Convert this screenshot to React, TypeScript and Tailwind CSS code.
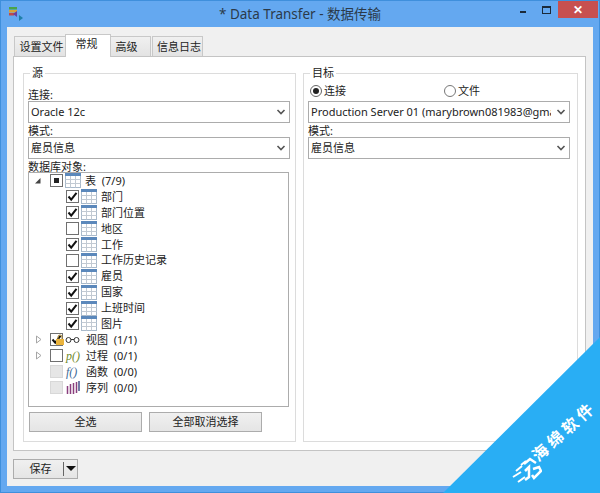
import { FC, ReactNode } from "react";

const FONT = "font-['Noto_Sans','Noto_Sans_CJK_SC',sans-serif]";

const TableIcon: FC = () => (
	<svg width="16" height="15" viewBox="0 0 16 15" className="shrink-0">
		<rect x="0.5" y="0.5" width="15" height="14" fill="#fff" stroke="#a9bacb" />
		<rect x="0" y="0" width="16" height="3" fill="#5b88bb" />
		<path d="M0.5 6.5H15.5M0.5 10.5H15.5M5.5 3V14.5M10.5 3V14.5" stroke="#c2cad3" fill="none" />
	</svg>
);

const Check: FC<{ state?: "on" | "off" | "mixed" | "disabled" }> = ({ state = "off" }) => (
	<span
		className={`flex h-[13px] w-[13px] shrink-0 items-center justify-center border ${
			state === "disabled" ? "border-[#d8d8d8] bg-[#e6e6e6]" : "border-[#707070] bg-white"
		}`}>
		{state === "on" && (
			<svg width="11" height="11" viewBox="0 0 11 11">
				<path d="M1.5 5.5L4.2 8.6L9.5 1.8" stroke="#111" strokeWidth="2" fill="none" />
			</svg>
		)}
		{state === "mixed" && <span className="h-[5px] w-[5px] bg-[#222]" />}
	</span>
);

const Select: FC<{ value: string }> = ({ value }) => (
	<div className="flex h-[22px] items-center border border-[#acacac] bg-white pl-[2px] pr-[3px]">
		<span className="grow overflow-hidden whitespace-nowrap">{value}</span>
		<svg width="10" height="8" viewBox="0 0 10 8" className="ml-[5px] shrink-0">
			<path d="M1.5 2L5 5.5L8.5 2" stroke="#555" strokeWidth="1.6" fill="none" />
		</svg>
	</div>
);

const Label: FC<{ text: string }> = ({ text }) => <div className="h-[14px] leading-[16px]">{text}</div>;

const Row: FC<{ children: ReactNode; indent: string }> = ({ children, indent }) => (
	<div className={`flex h-[15.9px] items-center ${indent}`}>{children}</div>
);

const Arrow: FC<{ open?: boolean }> = ({ open }) => (
	<svg width="8" height="9" viewBox="0 0 8 9" className="shrink-0">
		{open ? (
			<path d="M1 7.5H6.5V2Z" fill="#444" />
		) : (
			<path d="M1.5 1L6 4.5L1.5 8Z" fill="#fff" stroke="#a6a6a6" />
		)}
	</svg>
);

const tables: [string, boolean][] = [
	["部门", true],
	["部门位置", true],
	["地区", false],
	["工作", true],
	["工作历史记录", false],
	["雇员", true],
	["国家", true],
	["上班时间", true],
	["图片", true],
];

const Tree: FC = () => (
	<div className="mr-[1px] -mt-[1px] h-[235px] border border-[#acacac] bg-white">
		<Row indent="pl-[5px]">
			<Arrow open />
			<span className="ml-[8px]">
				<Check state="mixed" />
			</span>
			<span className="ml-[2px]">
				<TableIcon />
			</span>
			<span className="ml-[4px]">表&nbsp; (7/9)</span>
		</Row>
		{tables.map(([name, on]) => (
			<Row key={name} indent="pl-[37px]">
				<Check state={on ? "on" : "off"} />
				<span className="ml-[2px]">
					<TableIcon />
				</span>
				<span className="ml-[4px]">{name}</span>
			</Row>
		))}
		<Row indent="pl-[6px]">
			<Arrow />
			<span className="relative ml-[7px]">
				<Check state="on" />
				<svg width="10" height="11" viewBox="0 0 10 11" className="absolute left-[5px] top-[1px]">
					<path d="M3 5V3a2 2 0 0 1 4 0v2" stroke="#a8842c" fill="none" />
					<rect x="1" y="5" width="8" height="6" fill="#eab33c" />
				</svg>
			</span>
			<svg width="16" height="8" viewBox="0 0 16 8" className="ml-[2px] shrink-0">
				<circle cx="3.5" cy="4" r="2.5" stroke="#333" fill="none" />
				<circle cx="11.5" cy="4" r="2.5" stroke="#333" fill="none" />
				<path d="M6 3.5H9" stroke="#333" />
			</svg>
			<span className="ml-[5px]">视图&nbsp; (1/1)</span>
		</Row>
		<Row indent="pl-[6px]">
			<Arrow />
			<span className="ml-[7px]">
				<Check />
			</span>
			<span className="ml-[3px] w-[15px] font-['Liberation_Serif',serif] text-[12px] italic text-[#6f8a2c]">p()</span>
			<span className="ml-[5px]">过程&nbsp; (0/1)</span>
		</Row>
		<Row indent="pl-[21px]">
			<Check state="disabled" />
			<span className="ml-[3px] w-[15px] font-['Liberation_Serif',serif] text-[12px] italic text-[#3d6a96]">f()</span>
			<span className="ml-[5px]">函数&nbsp; (0/0)</span>
		</Row>
		<Row indent="pl-[21px]">
			<Check state="disabled" />
			<svg width="14" height="13" viewBox="0 0 14 13" className="ml-[3px] mr-[1px] shrink-0">
				<path d="M1.5 5V13M4.5 3V13M7.5 2V13M10.5 1V12" stroke="#8a3f7e" strokeWidth="1.5" />
				<path d="M13 0V10" stroke="#44508a" strokeWidth="1.5" />
			</svg>
			<span className="ml-[5px]">序列&nbsp; (0/0)</span>
		</Row>
	</div>
);

const Button: FC<{ label: string; className: string }> = ({ label, className }) => (
	<button className={`flex h-[20px] items-center justify-center border border-[#acacac] bg-gradient-to-b from-[#f0f0f0] to-[#e5e5e5] ${className}`}>
		{label}
	</button>
);

const Group: FC<{ title: string; children: ReactNode; className: string }> = ({ title, children, className }) => (
	<fieldset className={`min-w-0 border border-[#dcdcdc] pl-[4px] ${className}`}>
		<legend className="ml-[2px] px-[2px] leading-[14px]">{title}</legend>
		{children}
	</fieldset>
);

const App: FC = () => {
	return (
		<div className={`relative h-[493px] w-[600px] overflow-hidden ${FONT} text-[11px] leading-[14px] text-[#222]`}>
			<div className="flex h-full flex-col border border-[#3f8fdc] bg-[#64a8f0] px-[6px] pb-[6px]">
				<div className="relative flex h-[26px] shrink-0 items-center justify-center text-[13.5px] text-[#2b3a4a]">
					<svg width="16" height="16" viewBox="0 0 16 16" className="absolute left-[1px] top-[5px]">
						<rect x="1" y="1" width="8" height="2.5" fill="#4aa34a" />
						<rect x="1" y="4" width="8" height="2.5" fill="#d9a23a" />
						<rect x="1" y="7" width="5" height="2.5" fill="#c04a4a" />
						<path d="M5 8L9 5V11Z" fill="#6a3fa0" />
						<path d="M15 12L11 9V15Z" fill="#1f7fa8" />
					</svg>
					* Data Transfer - 数据传输
					<div className="absolute right-[-5px] top-0 flex h-[17px] items-center">
						<span className="mt-[5px] h-[2px] w-[6px] bg-[#1b2a3a]" />
						<span className="ml-[16px] h-[8px] w-[9px] border border-t-2 border-[#1b2a3a]" />
						<span className="ml-[7px] flex h-[17px] w-[40px] items-center justify-center bg-[#c75050] text-[12px] font-bold text-white">✕</span>
					</div>
				</div>
				<div className="flex grow flex-col bg-[#f0f0f0] pl-[6px] pr-[7px] pt-[8px]">
					<div className="relative z-10 flex h-[21px] items-end">
						<div className="ml-[1px] flex h-[20px] w-[52px] items-center justify-center border border-b-0 border-[#c8c8c8] bg-gradient-to-b from-[#f0f0f0] to-[#e3e3e3] pl-[3px]">设置文件</div>
						<div className="-mb-[1px] -ml-[1px] flex h-[23px] w-[46px] items-start justify-center border border-b-0 border-[#c8c8c8] bg-white pt-[2px] pr-[3px]">常规</div>
						<div className="-ml-[1px] flex h-[20px] w-[41px] items-center justify-center border border-b-0 border-[#c8c8c8] bg-gradient-to-b from-[#f0f0f0] to-[#e3e3e3] pr-[8px]">高级</div>
						<div className="ml-[1px] flex h-[20px] w-[51px] items-center justify-center border border-b-0 border-[#c8c8c8] bg-gradient-to-b from-[#f0f0f0] to-[#e3e3e3] pl-[3px]">信息日志</div>
					</div>
					<div className="flex h-[395px] gap-[7px] border border-[#c4c4c4] bg-white pl-[9px] pr-[7px] pt-[9px]">
						<Group title="源" className="h-[376px] w-[273px] pr-[5px]">
							<div className="pt-[7px]">
								<Label text="连接:" />
							</div>
							<Select value="Oracle 12c" />
							<Label text="模式:" />
							<Select value="雇员信息" />
							<Label text="数据库对象:" />
							<Tree />
							<div className="mt-[5px] flex gap-[7px] pl-[1px]">
								<Button label="全选" className="w-[113px]" />
								<Button label="全部取消选择" className="w-[113px]" />
							</div>
						</Group>
						<Group title="目标" className="h-[376px] w-[275px] pr-[7px]">
							<div className="flex h-[16px] items-center pl-[2px] pt-[5px]">
								<span className="flex h-[12px] w-[12px] items-center justify-center rounded-full border border-[#666]">
									<span className="h-[6px] w-[6px] rounded-full bg-[#222]" />
								</span>
								<span className="ml-[2px] w-[120px]">连接</span>
								<span className="h-[12px] w-[12px] rounded-full border border-[#777]" />
								<span className="ml-[2px]">文件</span>
							</div>
							<div className="mt-[5px]">
								<Select value="Production Server 01 (marybrown081983@gmail.com)" />
							</div>
							<Label text="模式:" />
							<Select value="雇员信息" />
						</Group>
					</div>
					<div className="mt-[8px] flex h-[20px] justify-between">
						<div className="flex h-[20px] w-[65px] items-center border border-[#acacac] bg-gradient-to-b from-[#f0f0f0] to-[#e5e5e5]">
							<span className="w-[49px] pl-[4px] text-center">保存</span>
							<span className="h-[14px] w-[1px] bg-[#666]" />
							<svg width="10" height="6" viewBox="0 0 10 6" className="ml-[2px]">
								<path d="M0 0H10L5 5Z" fill="#111" />
							</svg>
						</div>
						<Button label="" className="w-[80px]" />
					</div>
				</div>
			</div>
			{/* watermark ribbon over the corner */}
			<div className="absolute bottom-0 right-0 h-[156px] w-[157px] bg-[#29aef4] [clip-path:polygon(100%_0,100%_100%,0_100%)]" />
			<div className="absolute left-[564px] top-[431px] -translate-x-1/2 -translate-y-1/2 -rotate-[42deg] whitespace-nowrap text-[16px] font-bold leading-none tracking-[4px] text-white">
				海绵软件
			</div>
			<svg width="30" height="26" viewBox="0 0 30 26" className="absolute left-[512px] top-[457px]">
				<path d="M1 20L9 15M6 25L13 20M4 14L10 9M9 8L14 4" stroke="#fff" strokeWidth="2" fill="none" />
				<path d="M12 7L18 2L24 6M13 14L17 10V20L13 23M21 12L27 10L29 14L22 21L20 18" stroke="#fff" strokeWidth="2.5" fill="none" />
			</svg>
		</div>
	);
};

export default App;
